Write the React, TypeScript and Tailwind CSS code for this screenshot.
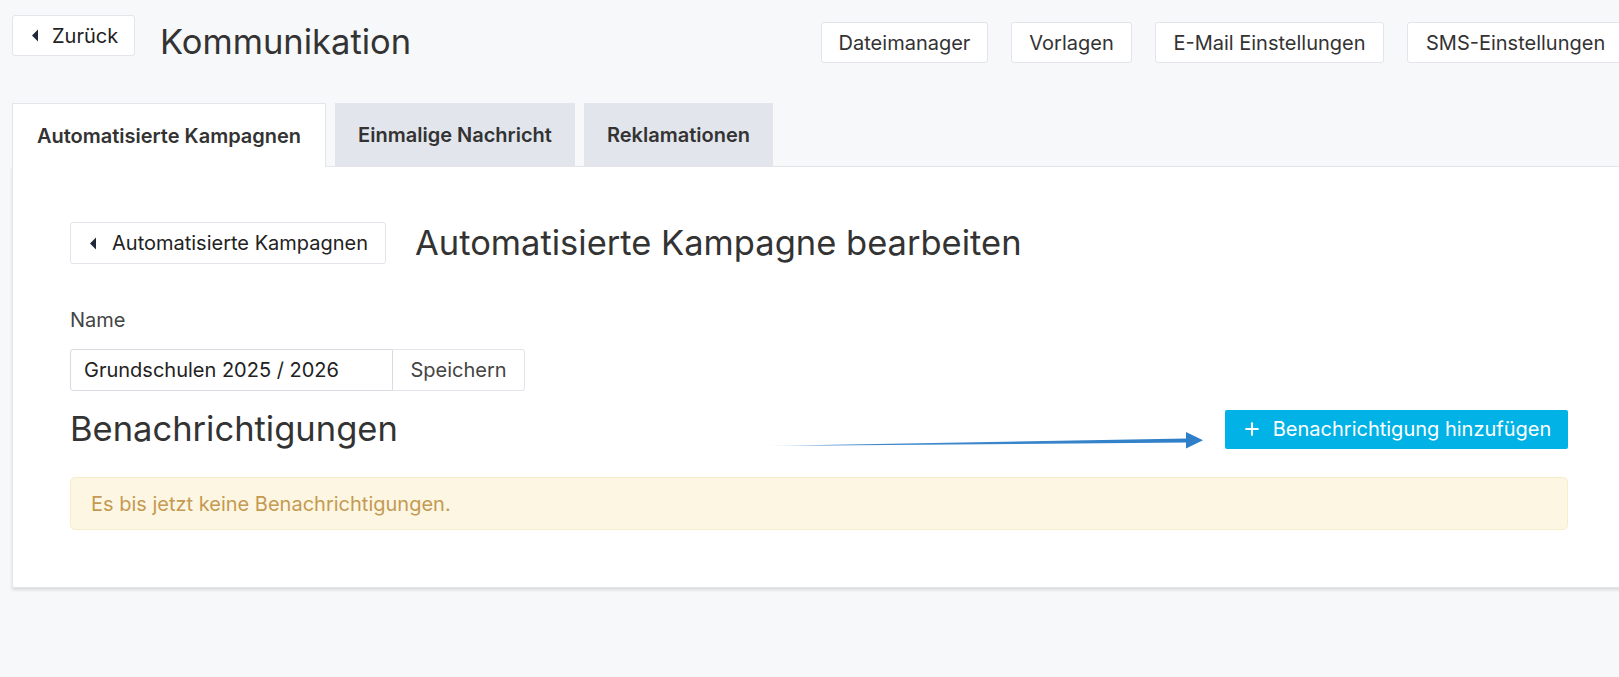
import { Plus } from 'lucide-react'

// Small left-pointing caret used in the "back" buttons
function Caret() {
  return (
    <svg viewBox="0 0 8 12" className="h-[13px] w-[8px] shrink-0" aria-hidden="true">
      <path d="M7 0 L7 12 L1 6 Z" fill="#1f2937" />
    </svg>
  )
}

function TopButton({ label, className = '' }: { label: string; className?: string }) {
  return (
    <button
      type="button"
      className={`flex h-[41px] items-center justify-center rounded-[3px] border border-[#e3e5ea] bg-white text-[20px] text-[#333] ${className}`}
    >
      {label}
    </button>
  )
}

export default function App() {
  return (
    <div
      className="relative h-[677px] w-[1619px] overflow-hidden bg-[#f7f8fa] text-[#333]"
      style={{ fontFamily: 'Inter, "Noto Sans", sans-serif' }}
    >
      <div className="w-[1700px]">
        {/* Header */}
        <div className="flex items-start pl-[12px] pt-[15px]">
          <button
            type="button"
            className="flex h-[41px] w-[123px] items-center gap-[13px] rounded-[3px] border border-[#e3e5ea] bg-white pl-[18px] text-[20px] text-[#222]"
          >
            <Caret />
            Zurück
          </button>
          <h1 className="ml-[25px] mt-[5px] w-[661px] text-[34.5px] leading-[44px] text-[#333]">
            Kommunikation
          </h1>
          <div className="mt-[7px] flex gap-[23px]">
            <TopButton label="Dateimanager" className="w-[167px]" />
            <TopButton label="Vorlagen" className="w-[121px]" />
            <TopButton label="E-Mail Einstellungen" className="w-[229px]" />
            <TopButton label="SMS-Einstellungen" className="px-[18px]" />
          </div>
        </div>

        {/* Tabs */}
        <div className="ml-[12px] mt-[39px] flex items-end gap-[9px]">
          <div className="relative z-10 -mb-px flex h-[64px] w-[314px] items-center justify-center border border-b-0 border-[#e3e5ea] bg-white text-[20px] font-semibold text-[#333]">
            Automatisierte Kampagnen
          </div>
          <div className="flex h-[63px] w-[240px] items-center justify-center bg-[#e2e5ec] text-[20px] font-semibold text-[#333]">
            Einmalige Nachricht
          </div>
          <div className="flex h-[63px] w-[189px] items-center justify-center bg-[#e2e5ec] text-[20px] font-semibold text-[#333]">
            Reklamationen
          </div>
        </div>

        {/* Card */}
        <div className="relative ml-[12px] h-[422px] border border-[#e3e5ea] bg-white pl-[57px] pt-[54px] shadow-[0_2px_3px_rgba(0,0,0,0.12)]">
          <div className="flex items-center">
            <button
              type="button"
              className="flex h-[42px] w-[316px] items-center gap-[15px] rounded-[3px] border border-[#e3e5ea] bg-white pl-[18px] text-[20px] text-[#222]"
            >
              <Caret />
              Automatisierte Kampagnen
            </button>
            <h2 className="ml-[29px] text-[34.5px] leading-[44px] text-[#333]">
              Automatisierte Kampagne bearbeiten
            </h2>
          </div>

          <div className="mt-[43px] text-[20px] leading-[24px] text-[#444]">Name</div>

          <div className="mt-[17px] flex">
            <div className="flex h-[42px] w-[323px] items-center rounded-l-[3px] border border-[#d8dbe0] bg-white px-[13px] text-[20px] text-[#222]">
              Grundschulen 2025 / 2026
            </div>
            <button
              type="button"
              className="h-[42px] w-[132px] rounded-r-[3px] border border-l-0 border-[#e3e5ea] bg-white text-[20px] text-[#444]"
            >
              Speichern
            </button>
          </div>

          <div className="mt-[14px] flex h-[48px] w-[1498px] items-center justify-between">
            <h3 className="text-[34.5px] leading-[48px] text-[#333]">Benachrichtigungen</h3>
            <button
              type="button"
              className="flex h-[39px] w-[343px] items-center justify-center gap-[11px] rounded-[2px] bg-[#00b2e6] text-[20px] text-white"
            >
              <Plus size={20} strokeWidth={2.5} />
              Benachrichtigung hinzufügen
            </button>
          </div>

          <div className="mt-[24px] flex h-[53px] w-[1498px] items-center rounded-[5px] border border-[#f8edcb] bg-[#fdf6e3] px-[20px] text-[20px] text-[#c49a52]">
            Es bis jetzt keine Benachrichtigungen.
          </div>

          {/* Annotation arrow */}
          <svg
            className="absolute left-[745px] top-[263px] h-[25px] w-[460px]"
            viewBox="0 0 460 25"
            aria-hidden="true"
          >
            <defs>
              <linearGradient id="arrowFade" x1="0" y1="0" x2="1" y2="0">
                <stop offset="0" stopColor="#2f7fc8" stopOpacity="0.1" />
                <stop offset="0.15" stopColor="#2f7fc8" stopOpacity="0.9" />
                <stop offset="1" stopColor="#2f7fc8" stopOpacity="1" />
              </linearGradient>
            </defs>
            <path d="M4 16 L429 8.5 L429 12.5 Z" fill="url(#arrowFade)" />
            <path d="M428 2 L445 10.3 L428 18.5 Z" fill="#2f7fc8" />
          </svg>
        </div>
      </div>
    </div>
  )
}
